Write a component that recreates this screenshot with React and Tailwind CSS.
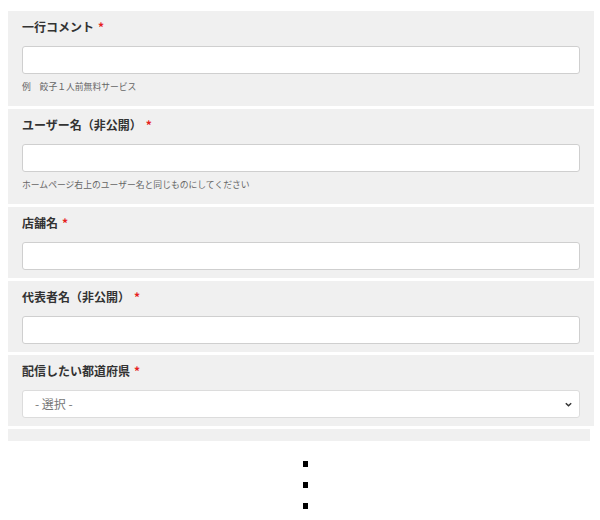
import React from "react";

const font = { fontFamily: '"Noto Sans CJK JP", "Noto Sans", sans-serif' };

function Label({ text }) {
  return (
    <div className="text-[12px] font-bold leading-[18px] text-[#333] mb-[10px]">
      {text}
      <span className="text-[#e62020] ml-[4px]">*</span>
    </div>
  );
}

function Input() {
  return <div className="h-[28px] bg-white border border-[#cfcfcf] rounded-[3px]" />;
}

function Section({ label, hint, children }) {
  return (
    <div className={`bg-[#f0f0f0] px-[14px] pt-[7px] ${hint ? "pb-[12px]" : "pb-[8px]"}`}>
      <Label text={label} />
      {children || <Input />}
      {hint && <div className="text-[8.8px] leading-[14px] mt-[6px] text-[#666]">{hint}</div>}
    </div>
  );
}

export default function App() {
  return (
    <div className="w-[600px] h-[520px] bg-white" style={font}>
      <div className="pt-[11px] pl-[8px] pr-[6px] flex flex-col gap-[3px]">
        <Section label="一行コメント" hint="例　餃子１人前無料サービス" />
        <Section label="ユーザー名（非公開）" hint="ホームページ右上のユーザー名と同じものにしてください" />
        <Section label="店舗名" />
        <Section label="代表者名（非公開）" />
        <Section label="配信したい都道府県">
          <div className="h-[28px] bg-white border border-[#dcdcdc] rounded-[3px] flex items-center justify-between pl-[12px] pr-[6px]">
            <span className="text-[12px] text-[#777]">- 選択 -</span>
            <svg width="9" height="9" viewBox="0 0 10 10">
              <path d="M2 3.5 L5 6.5 L8 3.5" fill="none" stroke="#333" strokeWidth="1.6" />
            </svg>
          </div>
        </Section>
        <div className="h-[12px] bg-[#f0f0f0] mr-[4px]" />
      </div>
      <div className="flex flex-col items-center gap-[15px] mt-[20px] pl-[10px]">
        <div className="w-[5px] h-[6px] bg-black" />
        <div className="w-[5px] h-[6px] bg-black" />
        <div className="w-[5px] h-[6px] bg-black" />
      </div>
    </div>
  );
}
